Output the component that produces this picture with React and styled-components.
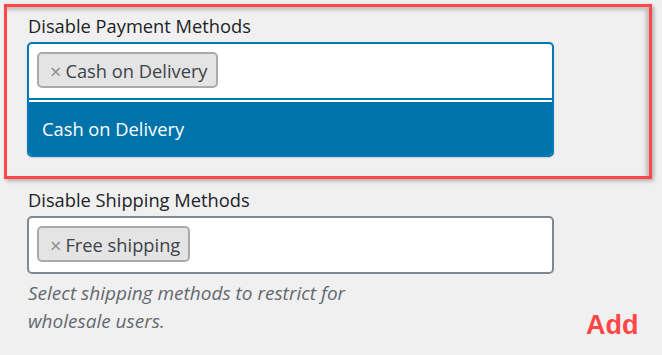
import React from "react";
import styled, { createGlobalStyle } from "styled-components";

const Global = createGlobalStyle`
  html, body { margin: 0; padding: 0; background: #f0f0f0; }
  body { font-family: "Open Sans", "Noto Sans", sans-serif; color: #1d2327; }
`;

const Page = styled.div`
  position: relative;
  width: 662px;
  height: 355px;
  padding: 4px;
  box-sizing: border-box;
  overflow: hidden;
`;

const Highlight = styled.section`
  box-sizing: border-box;
  width: 648px;
  border: 3px solid #ff4646;
  padding: 7px 0 19px 20px;
  box-shadow: 2px 2px 4px rgba(0, 0, 0, 0.28), inset -3px 3px 4px rgba(0, 0, 0, 0.22);
`;

const Field = styled.div`
  display: flex;
  flex-direction: column;
  align-items: flex-start;
  padding-left: ${(p) => p.$indent || 0}px;
  margin-top: ${(p) => p.$gap || 0}px;
`;

const Label = styled.label`
  font-size: 18.3px;
  line-height: 24px;
  padding-left: 1px;
  margin-bottom: 4px;
  color: #1d2327;
`;

const Select = styled.div`
  box-sizing: border-box;
  width: 527px;
  background: #fff;
  border: 2px solid ${(p) => (p.$open ? "#0079b8" : "#7e8993")};
  border-radius: 5px;
  overflow: hidden;
  box-shadow: ${(p) => (p.$open ? "0 1px 2px rgba(0,0,0,0.15)" : "none")};
`;

const Tags = styled.div`
  display: flex;
  padding: 8px 8px 10px;
  border-bottom: ${(p) => (p.$open ? "2px solid #0079b8" : "none")};
`;

const Chip = styled.span`
  box-sizing: border-box;
  display: inline-flex;
  align-items: center;
  height: 36px;
  padding: 0 8px 0 11px;
  background: #e4e4e4;
  border: 2px solid #aaaaaa;
  border-radius: 5px;
  font-size: 18.3px;
  color: #3c434a;
`;

const Remove = styled.span`
  color: #8c8c8c;
  font-size: 20px;
  line-height: 1;
  padding-top: 3px;
  margin-right: 4px;
  font-weight: 400;
`;

const Dropdown = styled.div`
  margin-top: 2px;
  background: #0073aa;
  height: 53px;
  display: flex;
  align-items: center;
  padding-left: 13px;
  color: #fff;
  font-size: 18.3px;
`;

const Description = styled.p`
  margin: 5px 0 0;
  padding-left: 1px;
  width: 360px;
  font-style: italic;
  font-size: 19px;
  line-height: 28px;
  color: #646970;
`;

const Note = styled.span`
  position: absolute;
  left: 586px;
  top: 310px;
  font-family: "Liberation Sans", Arial, sans-serif;
  font-weight: 700;
  font-size: 27px;
  color: #ff4646;
`;

export default function App() {
  return (
    <>
      <Global />
      <Page>
        <Highlight>
          <Field>
            <Label>Disable Payment Methods</Label>
            <Select $open>
              <Tags $open>
                <Chip>
                  <Remove>×</Remove>Cash on Delivery
                </Chip>
              </Tags>
              <Dropdown>Cash on Delivery</Dropdown>
            </Select>
          </Field>
        </Highlight>
        <Field $indent={23} $gap={9}>
          <Label>Disable Shipping Methods</Label>
          <Select>
            <Tags>
              <Chip>
                <Remove>×</Remove>Free shipping
              </Chip>
            </Tags>
          </Select>
          <Description>
            Select shipping methods to restrict for wholesale users.
          </Description>
        </Field>
        <Note>Add</Note>
      </Page>
    </>
  );
}
